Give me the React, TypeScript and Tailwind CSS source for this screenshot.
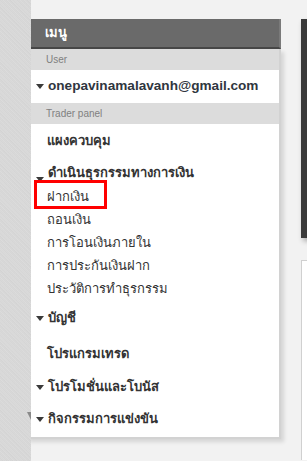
import React from "react";

const Caret = () => (
  <svg width="8" height="5" viewBox="0 0 8 5" className="mr-[4px] shrink-0">
    <path d="M0 0 L8 0 L4 5 Z" fill="#3a3a3a" />
  </svg>
);

export default function App() {
  const font = { fontFamily: '"Liberation Sans", Tahoma, sans-serif' };
  return (
    <div className="flex h-[461px] w-[307px] overflow-hidden bg-[#f2f2f2]" style={font}>
      <div className="relative w-[31px] shrink-0 bg-[#d6d6d6] bg-[repeating-linear-gradient(45deg,#d3d3d3_0px,#dcdcdc_1px,#d5d5d5_2px,#dadada_3px)]">
        <div className="absolute left-[27px] top-[412px] h-0 w-0 border-l-[4px] border-t-[8px] border-l-transparent border-t-[#8a8a8a]" />
      </div>
      <div className="flex flex-1 pt-[19px]">
        <div className="-ml-[5px] w-[255px] shrink-0">
          <div className="flex h-[30px] items-center border-b-2 border-r-2 border-b-[#474747] border-r-[#7a7a7a] bg-[#6a6a6a] pl-[19px] text-[13px] font-bold text-white">
            เมนู
          </div>
          <div className="h-[390px] border-2 border-t-0 border-[#d2d2d2] border-l-[#cfcfcf] bg-white shadow-[3px_3px_4px_rgba(0,0,0,0.12)]">
            <div className="flex h-[21px] items-center bg-[#dcdcdc] pl-[18px] text-[10px] text-[#808080]">User</div>
            <div className="flex h-[33px] items-center pl-[8px] text-[13.6px] font-bold text-[#2f3640]">
              <Caret />
              onepavinamalavanh@gmail.com
            </div>
            <div className="flex h-[21px] items-center bg-[#dcdcdc] pl-[18px] text-[10px] text-[#808080]">Trader panel</div>
            <div className="flex h-[33px] items-center pl-[19px] text-[13px] font-bold text-[#333]">แผงควบคุม</div>
            <div className="flex h-[28px] items-end pb-[3px] pl-[8px] text-[13px] font-bold text-[#333]">
              <Caret />
              ดำเนินธุรกรรมทางการเงิน
            </div>
            <div className="relative flex h-[23px] items-center pl-[19px] text-[13px] text-[#333]">
              ฝากเงิน
              <div className="absolute left-[6px] top-[-5px] h-[29px] w-[73px] border-[3px] border-[#ff0000]" />
            </div>
            <div className="flex h-[23px] items-center pl-[19px] text-[13px] text-[#333]">ถอนเงิน</div>
            <div className="flex h-[23px] items-center pl-[19px] text-[13px] text-[#333]">การโอนเงินภายใน</div>
            <div className="flex h-[23px] items-center pl-[19px] text-[13px] text-[#333]">การประกันเงินฝาก</div>
            <div className="flex h-[23px] items-center pl-[19px] text-[13px] text-[#333]">ประวัติการทำธุรกรรม</div>
            <div className="flex h-[36px] items-center pl-[8px] text-[13px] font-bold text-[#333]">
              <Caret />
              บัญชี
            </div>
            <div className="flex h-[35px] items-center pl-[19px] text-[13px] font-bold text-[#333]">โปรแกรมเทรด</div>
            <div className="flex h-[32px] items-center pl-[8px] text-[13px] font-bold text-[#333]">
              <Caret />
              โปรโมชั่นและโบนัส
            </div>
            <div className="flex h-[32px] items-center pl-[8px] text-[13px] font-bold text-[#333]">
              <Caret />
              กิจกรรมการแข่งขัน
            </div>
          </div>
        </div>
        <div className="ml-[20px] flex flex-col">
          <div className="h-[219px] w-[40px] bg-[#3a3a3a] shadow-[2px_3px_5px_rgba(0,0,0,0.3)]" />
          <div className="mt-[22px] h-[200px] w-[40px] border-l border-t border-[#d0d0d0] bg-white" />
        </div>
      </div>
    </div>
  );
}
